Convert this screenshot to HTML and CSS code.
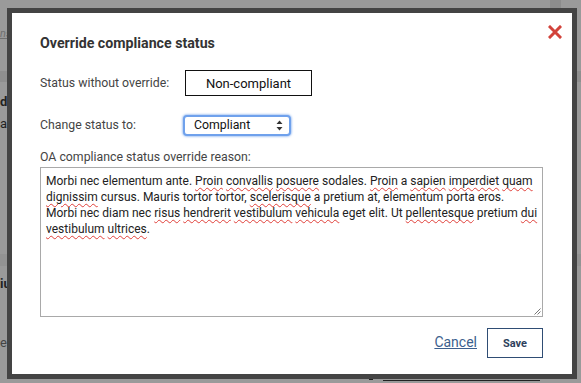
FILE: index.html
```html
<!DOCTYPE html>
<html lang="en">
<head>
<meta charset="utf-8">
<title>Override compliance status</title>
<link rel="stylesheet" href="styles.css">
</head>
<body>
<div class="under">
  <div class="under-top"><span class="under-col"></span></div>
  <div class="under-link">ns</div>
  <div class="under-band"></div>
  <div class="under-bold">di</div>
  <div class="under-text">ai</div>
  <div class="under-band2"></div>
  <div class="under-bold under-bold2">iu</div>
  <div class="under-text under-text2">e</div>
  <div class="under-bottom"><span class="tick"></span><span class="rule"></span></div>
</div>

<div class="modal" role="dialog" aria-labelledby="ttl">
  <button class="close" aria-label="Close">
    <svg width="14" height="14" viewBox="0 0 14 14"><path d="M2 2 L12 12 M12 2 L2 12" stroke="#d2433b" stroke-width="3" stroke-linecap="square"/></svg>
  </button>
  <h2 id="ttl" class="title">Override compliance status</h2>
  <div class="row">
    <span class="label">Status without override:</span>
    <span class="status-box">Non-compliant</span>
  </div>
  <div class="row row2">
    <span class="label">Change status to:</span>
    <span class="select-wrap">
      <select class="select"><option>Compliant</option><option>Non-compliant</option></select>
      <svg class="arrows" width="7" height="11" viewBox="0 0 7 11"><path d="M3.5 0.5 L6.5 4 L0.5 4 Z M3.5 10.5 L6.5 7 L0.5 7 Z" fill="#333"/></svg>
    </span>
  </div>
  <div class="label reason-label">OA compliance status override reason:</div>
  <div class="textarea" contenteditable="true">Morbi nec elementum ante. <u>Proin</u> <u>convallis</u> <u>posuere</u> sodales. <u>Proin</u> a <u>sapien</u> <u>imperdiet</u> <u>quam</u><br><u>dignissim</u> cursus. Mauris tortor tortor, <u>scelerisque</u> a pretium at, elementum porta eros.<br>Morbi nec diam nec <u>risus</u> <u>hendrerit</u> <u>vestibulum</u> <u>vehicula</u> eget elit. Ut <u>pellentesque</u> pretium <u>dui</u><br><u>vestibulum</u> <u>ultrices</u>.
    <svg class="grip" width="8" height="8" viewBox="0 0 8 8"><path d="M7.5 1.5 L1.5 7.5 M7.5 4.5 L4.5 7.5" stroke="#777" stroke-width="1"/></svg>
  </div>
  <div class="actions">
    <a class="cancel" href="#">Cancel</a>
    <button class="save">Save</button>
  </div>
</div>
</body>
</html>
```

FILE: styles.css
```css
* { box-sizing: border-box; }
html, body { margin: 0; padding: 0; }
body {
  width: 581px;
  height: 383px;
  overflow: hidden;
  background: #9a9a9a;
  position: relative;
  font-family: Roboto, "Liberation Sans", sans-serif;
}

/* underlying page (dimmed) */
.under { display: flex; flex-direction: column; height: 383px; }
.under-top { height: 8px; display: flex; justify-content: flex-end; padding-right: 20px; }
.under-col { width: 11px; height: 8px; background: #8d8d8d; }
.under-link {
  margin-top: 20px; height: 12px;
  font-style: italic; font-size: 11px; line-height: 12px; color: #707070; text-decoration: underline;
}
.under-band { margin-top: 31px; height: 11px; background: #8f8f8f; }
.under-bold { margin-top: 12px; font-size: 13px; line-height: 15px; font-weight: 700; color: #222; white-space: nowrap; }
.under-text { margin-top: 7px; font-size: 13px; line-height: 15px; color: #222; white-space: nowrap; }
.under-band2 { margin-top: 123px; height: 12px; background: #939393; }
.under-bold2 { margin-top: 10px; }
.under-text2 { margin-top: 44px; color: #444; }
.under-bottom { margin-top: auto; height: 4px; display: flex; align-items: flex-start; padding-left: 369px; }
.under-bottom .tick { width: 4px; height: 1px; background: #222; }
.under-bottom .rule { margin-left: 10px; width: 157px; height: 1px; margin-top: 1px; background: #222; }

/* modal */
.modal {
  position: absolute;
  left: 7px;
  top: 8px;
  width: 570px;
  height: 371px;
  background: #fff;
  border: 5px solid #444;
  padding: 22px 29px 0 28px;
  display: flex;
  flex-direction: column;
}
.close {
  position: absolute;
  right: 10px;
  top: 12px;
  background: none;
  border: 0;
  padding: 0;
  width: 14px;
  height: 14px;
  display: flex;
}
.title {
  margin: 0;
  font-size: 14.2px;
  line-height: 16px;
  font-weight: 700;
  color: #333;
}
.label {
  font-size: 12.3px;
  line-height: 15px;
  color: #444;
}
.row {
  display: flex;
  align-items: center;
  margin-top: 19px;
  height: 26px;
}
.row .label { width: 145px; }
.row2 { margin-top: 18px; height: 22px; }
.status-box {
  width: 127px;
  height: 26px;
  border: 1px solid #111;
  display: flex;
  align-items: center;
  justify-content: center;
  font-size: 13px;
  color: #111;
}
.select-wrap {
  position: relative;
  display: flex;
  margin-left: -2px;
}
.select {
  appearance: none;
  -webkit-appearance: none;
  width: 108px;
  height: 21px;
  border: 2px solid #6fa1ec;
  border-radius: 4px;
  box-shadow: 0 0 2px 1px rgba(110, 160, 236, 0.55);
  background: #fff;
  font-family: inherit;
  font-size: 12.3px;
  color: #111;
  padding: 0 0 0 9px;
  outline: none;
}
.arrows { position: absolute; right: 8px; top: 5px; pointer-events: none; }
.reason-label { margin-top: 14px; }
.textarea {
  position: relative;
  margin-top: 2px;
  width: 503px;
  height: 150px;
  border: 1px solid #a9a9a9;
  padding: 5px 5px;
  font-size: 12px;
  line-height: 16px;
  color: #222;
  white-space: nowrap;
  outline: none;
}
.textarea u {
  text-decoration: underline wavy #e0403a;
  text-decoration-thickness: 1px;
  text-underline-offset: 2px;
}
.grip { position: absolute; right: 1px; bottom: 1px; }
.actions {
  margin-top: 11px;
  display: flex;
  justify-content: flex-end;
  align-items: center;
  gap: 10px;
  width: 503px;
}
.cancel {
  font-size: 14px;
  line-height: 16px;
  margin-top: -2px;
  color: #3c5f8e;
  text-decoration: underline;
}
.save {
  width: 56px;
  height: 30px;
  background: #fff;
  border: 1px solid #2f4d74;
  font-family: inherit;
  font-size: 11px;
  font-weight: 700;
  color: #2e3f5c;
  padding: 0;
}
```
